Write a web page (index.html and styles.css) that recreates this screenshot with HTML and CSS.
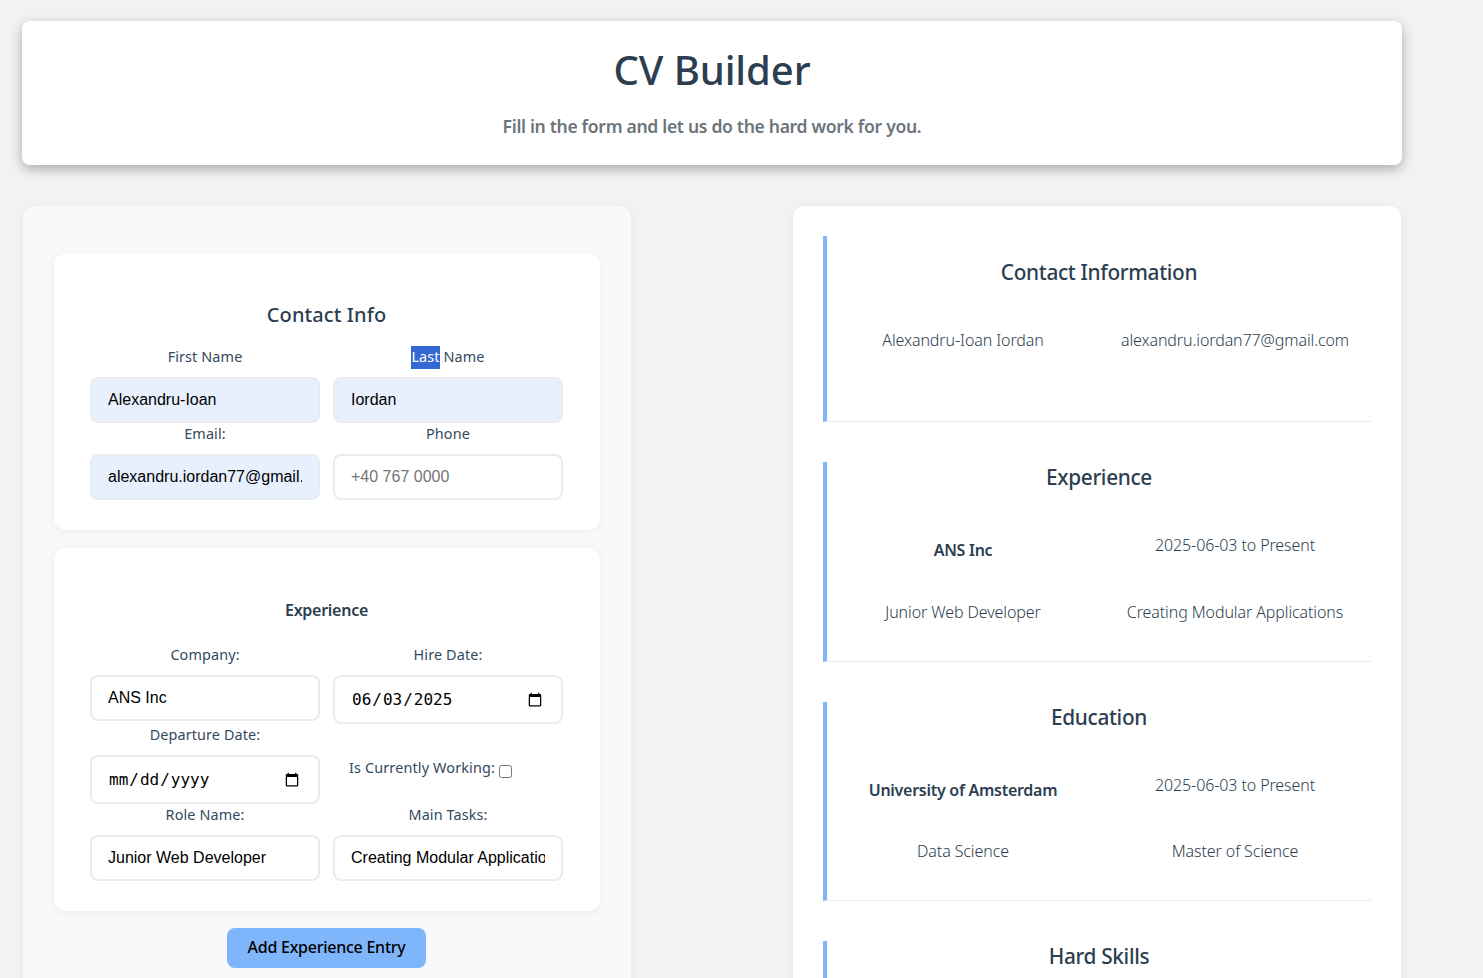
FILE: index.html
```html
<!DOCTYPE html>
<html lang="en">
<head>
<meta charset="utf-8">
<title>CV Builder</title>
<link rel="stylesheet" href="styles.css">
</head>
<body>
<div class="page">
  <header class="hero">
    <h1>CV Builder</h1>
    <p>Fill in the form and let us do the hard work for you.</p>
  </header>
  <main class="columns">
    <section class="panel panel-form">
      <form class="form-card">
        <h2 class="card-title">Contact Info</h2>
        <div class="field-grid">
          <div class="field"><label>First Name</label><input class="filled" type="text" value="Alexandru-Ioan"></div>
          <div class="field"><label><span class="selected">Last</span> Name</label><input class="filled" type="text" value="Iordan"></div>
          <div class="field"><label>Email:</label><input class="filled" type="text" value="alexandru.iordan77@gmail.com"></div>
          <div class="field"><label>Phone</label><input type="text" placeholder="+40 767 0000"></div>
        </div>
      </form>
      <form class="form-card form-card-exp">
        <h3 class="card-subtitle">Experience</h3>
        <div class="field-grid">
          <div class="field"><label>Company:</label><input type="text" value="ANS Inc"></div>
          <div class="field"><label>Hire Date:</label><input type="date" value="2025-06-03"></div>
          <div class="field"><label>Departure Date:</label><input type="date"></div>
          <div class="field field-check"><label>Is Currently Working:</label><input type="checkbox"></div>
          <div class="field"><label>Role Name:</label><input type="text" value="Junior Web Developer"></div>
          <div class="field"><label>Main Tasks:</label><input type="text" value="Creating Modular Applications"></div>
        </div>
      </form>
      <div class="actions"><button type="button" class="add-btn">Add Experience Entry</button></div>
    </section>
    <section class="panel panel-preview">
      <article class="cv-section cv-contact">
        <h3>Contact Information</h3>
        <div class="cv-grid">
          <div>Alexandru-Ioan Iordan</div>
          <div>alexandru.iordan77@gmail.com</div>
        </div>
      </article>
      <article class="cv-section">
        <h3>Experience</h3>
        <div class="cv-grid">
          <div class="cv-strong">ANS Inc</div>
          <div>2025-06-03 to Present</div>
          <div>Junior Web Developer</div>
          <div>Creating Modular Applications</div>
        </div>
      </article>
      <article class="cv-section cv-edu">
        <h3>Education</h3>
        <div class="cv-grid">
          <div class="cv-strong">University of Amsterdam</div>
          <div>2025-06-03 to Present</div>
          <div>Data Science</div>
          <div>Master of Science</div>
        </div>
      </article>
      <article class="cv-section">
        <h3>Hard Skills</h3>
      </article>
    </section>
  </main>
</div>
</body>
</html>
```
FILE: styles.css
```css
* { box-sizing: border-box; }
html, body { margin: 0; height: 100vh; overflow: hidden; }
body {
  background: #f1f2f4;
  font-family: "Noto Sans", sans-serif;
  color: #2c3e50;
}
.page { width: 1380px; margin-left: 22px; padding-top: 21px; }
.hero {
  height: 144px;
  background: #fff;
  border-radius: 8px;
  box-shadow: 0 4px 12px rgba(0,0,0,.3);
  text-align: center;
  padding-top: 22px;
}
.hero h1 { margin: 0; font-size: 40px; line-height: 54px; font-weight: 500; letter-spacing: -0.1px; color: #2c3e50; }
.hero p { margin: 17px 0 0; font-size: 17.6px; line-height: 24px; font-weight: 600; letter-spacing: -0.33px; color: #6c757d; }
.columns { display: flex; justify-content: space-between; padding: 41px 1px 0; }
.panel {
  width: 608px;
  height: 900px;
  border-radius: 12px;
  box-shadow: 0 2px 10px rgba(0,0,0,.05);
}
.panel-form { background: #f8f9fa; padding: 47px 31px 0; }
.panel-preview { background: #fff; padding: 30px; }
.form-card {
  background: #fff;
  border-radius: 12px;
  box-shadow: 0 2px 8px rgba(0,0,0,.05);
  padding: 0 37px 30px 36px;
}
.form-card-exp { margin-top: 18px; }
.card-title { margin: 0; padding-top: 48px; height: 93px; font-size: 20px; line-height: 28px; font-weight: 500; text-align: center; letter-spacing: 0.1px; }
.card-subtitle { margin: 0; padding-top: 51px; height: 96px; font-size: 16px; line-height: 22px; font-weight: 600; text-align: center; letter-spacing: -0.27px; }
.field-grid { display: grid; grid-template-columns: 230px 230px; column-gap: 13px; align-items: start; }
.field { display: flex; flex-direction: column; }
.field label { display: block; height: 23px; margin-bottom: 8px; font-size: 14.4px; line-height: 21px; text-align: center; color: #34495e; letter-spacing: 0.12px; }
.selected { display: inline-block; background: #3367d1; color: #fff; padding-bottom: 2px; }
input[type="text"], input[type="date"] {
  width: 230px;
  border: 2px solid #e9ecef;
  border-radius: 8px;
  padding: 12px 16px;
  background: #fff;
  color: #000;
  font-size: 16px;
  outline: none;
}
input[type="text"] { height: 46px; font-family: "Liberation Sans", sans-serif; }
input[type="date"] { height: 49px; font-family: "DejaVu Sans Mono", monospace; font-size: 16px; }
input.filled { background: #e8f0fe; }
input::placeholder { color: #757575; }
.field-check { flex-direction: row; align-items: center; padding: 8px 0 0 16px; height: 80px; }
.field-check label { margin: 0; font-size: 14.4px; letter-spacing: 0.15px; }
.field-check input { margin: 6px 0 0 4px; width: 13px; height: 13px; }
.actions { display: flex; justify-content: center; margin-top: 17px; padding-right: 1px; }
.add-btn {
  width: 199px;
  height: 40px;
  border: 0;
  border-radius: 8px;
  background: #7fb6fb;
  color: #000;
  font-family: "Noto Sans", sans-serif;
  font-size: 16px;
  font-weight: 500;
  letter-spacing: -0.25px;
  padding: 0 0 2px;
}
.cv-section {
  border-left: 4px solid #7fb6fb;
  border-bottom: 1px solid #e9ecef;
  margin-bottom: 40px;
  padding-top: 4px;
  padding-bottom: 37px;
}
.cv-section h3 { margin: 0; height: 24px; font-size: 20.8px; line-height: 22px; font-weight: 500; text-align: center; letter-spacing: -0.33px; }
.cv-grid { display: grid; grid-template-columns: 1fr 1fr; row-gap: 38px; margin-top: 43px; font-size: 16px; line-height: 24px; font-weight: 300; text-align: center; letter-spacing: -0.1px; }
.cv-strong { font-weight: 600; padding-top: 5px; letter-spacing: -0.27px; }
.cv-edu .cv-grid { row-gap: 37px; }
.cv-contact { padding-top: 25px; padding-bottom: 69px; }
```
